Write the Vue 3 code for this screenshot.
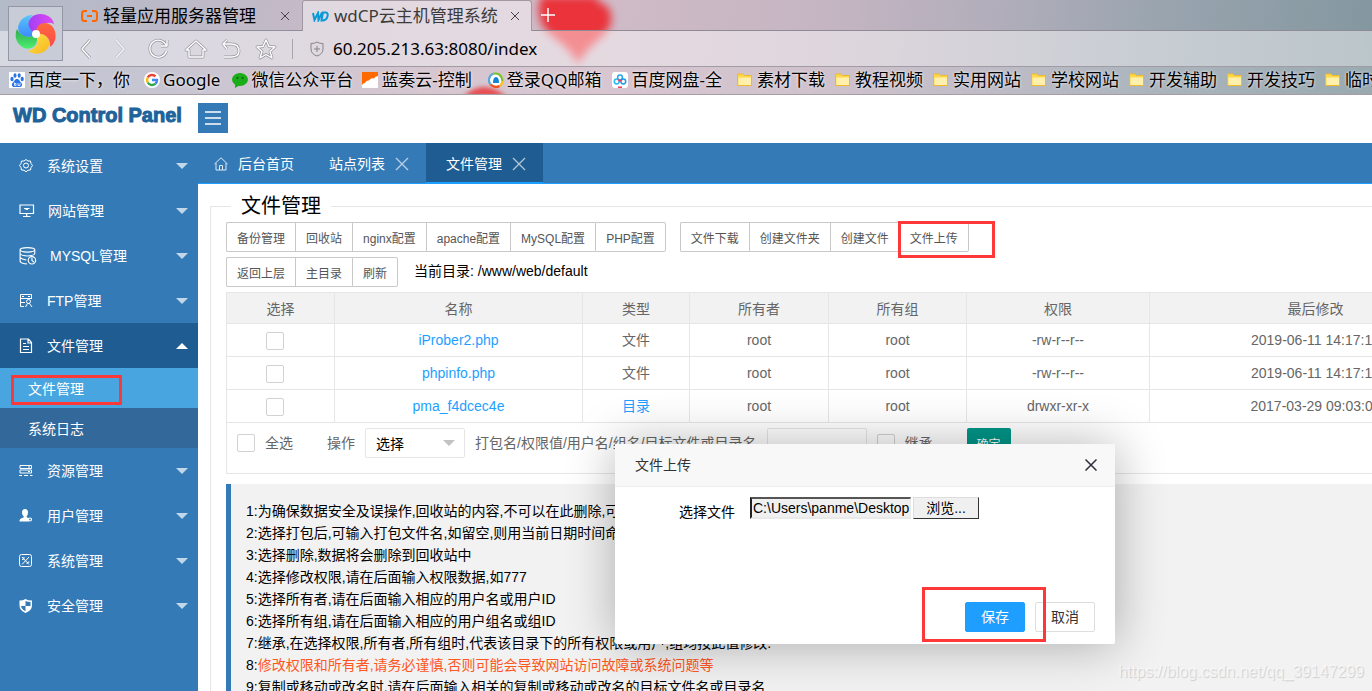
<script setup>
import { ref } from 'vue'

const bookmarks = [
  { icon: 'baidu', text: '百度一下，你', gap: 14 },
  { icon: 'google', text: 'Google', gap: 12 },
  { icon: 'wechat', text: '微信公众平台', gap: 9 },
  { icon: 'lanzou', text: '蓝奏云-控制', gap: 16 },
  { icon: 'qqmail', text: '登录QQ邮箱', gap: 11 },
  { icon: 'pan', text: '百度网盘-全', gap: 15 },
  { icon: 'folder', text: '素材下载', gap: 10 },
  { icon: 'folder', text: '教程视频', gap: 10 },
  { icon: 'folder', text: '实用网站', gap: 10 },
  { icon: 'folder', text: '学校网站', gap: 10 },
  { icon: 'folder', text: '开发辅助', gap: 10 },
  { icon: 'folder', text: '开发技巧', gap: 10 },
  { icon: 'folder', text: '临时', gap: 0 },
]

const menu = [
  { icon: 'gear', text: '系统设置' },
  { icon: 'monitor', text: '网站管理', size: 16 },
  { icon: 'database', text: 'MYSQL管理', size: 18 },
  { icon: 'ftp', text: 'FTP管理' },
  { icon: 'doc', text: '文件管理', open: true, children: ['文件管理', '系统日志'] },
  { icon: 'server', text: '资源管理' },
  { icon: 'user', text: '用户管理' },
  { icon: 'tools', text: '系统管理' },
  { icon: 'shield', text: '安全管理' },
]

const groupA = ['备份管理', '回收站', 'nginx配置', 'apache配置', 'MySQL配置', 'PHP配置']
const groupB = ['文件下载', '创建文件夹', '创建文件', '文件上传']
const groupC = ['返回上层', '主目录', '刷新']

const columns = ['选择', '名称', '类型', '所有者', '所有组', '权限', '最后修改']
const rows = [
  { name: 'iProber2.php', type: '文件', perm: '-rw-r--r--', time: '2019-06-11 14:17:17' },
  { name: 'phpinfo.php', type: '文件', perm: '-rw-r--r--', time: '2019-06-11 14:17:17' },
  { name: 'pma_f4dcec4e', type: '目录', dir: true, perm: 'drwxr-xr-x', time: '2017-03-29 09:03:00' },
]

const notes = [
  '为确保数据安全及误操作,回收站的内容,不可以在此删除,可',
  '选择打包后,可输入打包文件名,如留空,则用当前日期时间命',
  '选择删除,数据将会删除到回收站中',
  '选择修改权限,请在后面输入权限数据,如777',
  '选择所有者,请在后面输入相应的用户名或用户ID',
  '选择所有组,请在后面输入相应的用户组名或组ID',
  '继承,在选择权限,所有者,所有组时,代表该目录下的所有权限或用户,组均按此值修改.',
  '修改权限和所有者,请务必谨慎,否则可能会导致网站访问故障或系统问题等',
  '复制或移动或改名时,请在后面输入相关的复制或移动或改名的目标文件名或目录名',
]

const filePath = ref('C:\\Users\\panme\\Desktop')
</script>

<template>
  <div class="app">
    <div class="chrome">
      <svg class="heart" width="90" height="72" viewBox="0 0 90 72" aria-hidden="true">
        <path d="M14 0H70Q66 5 74 7Q85 12 83 27C80 40 62 46 50 68C40 46 20 42 13 26Q8 10 14 0Z" fill="#ec2c33" />
      </svg>
      <svg class="heart-tip" width="60" height="14" viewBox="0 0 60 14" aria-hidden="true">
        <path d="M8 14Q28-6 52 14Z" fill="#e2272d" />
      </svg>

      <button class="brand" aria-label="浏览器菜单">
        <svg width="42" height="42" viewBox="0 0 42 42">
          <defs>
            <linearGradient id="petal-a" x2="1"><stop stop-color="#a23df5" /><stop offset="1" stop-color="#e04cf0" /></linearGradient>
            <linearGradient id="petal-b" x2="0" y2="1"><stop stop-color="#ff6a3d" /><stop offset="1" stop-color="#fb4a4a" /></linearGradient>
            <linearGradient id="petal-c" x2="1" y2="1"><stop stop-color="#ffe14d" /><stop offset="1" stop-color="#f5b81c" /></linearGradient>
            <linearGradient id="petal-d" x2="0" y2="1"><stop stop-color="#2fa84f" /><stop offset="1" stop-color="#4cf070" /></linearGradient>
            <linearGradient id="petal-e" x2="0" y2="1"><stop stop-color="#58c6f8" /><stop offset="1" stop-color="#3d8bfd" /></linearGradient>
          </defs>
          <path d="M21 21C10 18 11 6 20 2C29-1 38 4 39 11C33 8 25 10 21 21Z" fill="url(#petal-a)" />
          <path d="M21 21C20 10 31 7 37 13C43 20 41 30 35 34C36 26 31 20 21 21Z" fill="url(#petal-b)" />
          <path d="M21 21C31 19 37 28 33 35C28 42 19 42 13 38C21 36 25 30 21 21Z" fill="url(#petal-c)" />
          <path d="M21 21C25 31 17 38 9 35C1 31-1 23 2 16C6 23 12 26 21 21Z" fill="url(#petal-d)" />
          <path d="M21 21C12 27 3 22 3 14C5 5 12 2 18 2C11 8 12 16 21 21Z" fill="url(#petal-e)" />
          <circle cx="21" cy="21" r="4" fill="#fff" />
        </svg>
      </button>

      <div class="tabstrip">
        <div class="btab">
          <svg width="17" height="12" viewBox="0 0 17 12" fill="none" stroke="#f60" stroke-width="2"><path d="M6 1H3.500Q1 1 1 3.500V8.500Q1 11 3.500 11H6M11 1H13.500Q16 1 16 3.500V8.500Q16 11 13.500 11H11M6 6H11" /></svg>
          <span>轻量应用服务器管理</span>
          <button aria-label="关闭标签"><svg width="8" height="8" viewBox="0 0 8 8" stroke="#444" stroke-width="1"><path d="M0 0L8 8M8 0L0 8" /></svg></button>
        </div>
        <div class="btab on">
          <svg width="17" height="11" viewBox="0 0 17 11" fill="none" stroke="#0a9ad8" stroke-width="2"><path d="M1 2L2.500 9L6 2L6.500 9L10 1.500M11 1L9.500 9.500H11C16 9 17 1.500 14 1.500H10" /></svg>
          <span>wdCP云主机管理系统</span>
          <button aria-label="关闭标签"><svg width="8" height="8" viewBox="0 0 8 8" stroke="#444" stroke-width="1"><path d="M0 0L8 8M8 0L0 8" /></svg></button>
        </div>
        <button class="plus" aria-label="新建标签"><svg width="14" height="14" viewBox="0 0 14 14" stroke="#fff" stroke-width="1.500"><path d="M7 0V14M0 7H14" /></svg></button>
      </div>

      <div class="toolbar">
        <svg class="nav-icons" width="196" height="24" viewBox="0 0 196 24" fill="none" stroke-linejoin="round">
          <g v-for="(c, i) in ['#96959e', '#fff']" :key="c" :stroke="c" :stroke-width="i ? 1.4 : 2.8">
            <path d="M10 3L2 12L10 21" />
            <path d="M36 3L44 12L36 21" :opacity="i ? 0.8 : 0.35" />
            <path d="M86 8A8.500 8.500 0 1 0 86.500 14M87 3V9H81" />
            <path d="M106 13L116 4L126 13H123V20H109V13Z" />
            <path d="M147 3L143 7L147 12M143 7H151Q159 7 159 14Q159 20 151 20H144" />
            <path d="M186 3L189 9.500L195 10L190 14.500L192 21L186 17.500L180 21L182 14.500L177 10L183 9.500Z" />
          </g>
        </svg>
        <i class="sep"></i>
        <svg class="guard" width="14" height="16" viewBox="0 0 14 16" fill="none" stroke="#85838a"><path d="M7 1Q9 2.500 13 2.500V8Q13 13 7 15Q1 13 1 8V2.500Q5 2.500 7 1ZM7 5V11M4 8H10" /></svg>
        <input class="url" aria-label="地址栏" value="60.205.213.63:8080/index" />
      </div>

      <nav class="bookmarks">
        <a v-for="(b, i) in bookmarks" :key="i" href="#" :style="{ marginRight: b.gap + 'px' }">
          <svg v-if="b.icon === 'baidu'" width="16" height="16" viewBox="0 0 16 16"><rect width="16" height="16" fill="#fff" /><g fill="#2a73e8"><ellipse cx="3" cy="7" rx="1.600" ry="2.200" /><ellipse cx="6" cy="3.500" rx="1.500" ry="2.200" /><ellipse cx="10.200" cy="3.500" rx="1.500" ry="2.200" /><ellipse cx="13.200" cy="7" rx="1.600" ry="2.200" /><path d="M8 7C10.500 7 10.500 9.500 12.500 11C14 13 12.500 15.500 10 15H6C3.500 15.500 2 13 3.500 11C5.500 9.500 5.500 7 8 7Z" /></g><path d="M5.500 10.500V13.500H7V11.500H5.500M9 11V13.500H11V11" stroke="#fff" stroke-width=".8" fill="none" /></svg>
          <svg v-else-if="b.icon === 'google'" width="16" height="16" viewBox="0 0 16 16"><circle cx="8" cy="8" r="8" fill="#fff" /><g fill="none" stroke-width="2.400"><path d="M3.700 5.500A5 5 0 0 1 11.500 4.300" stroke="#ea4335" /><path d="M3.700 10.500A5 5 0 0 1 3.700 5.500" stroke="#fbbc05" /><path d="M11.500 11.600A5 5 0 0 1 3.700 10.500" stroke="#34a853" /><path d="M8 8H13Q13 10.300 11.500 11.600" stroke="#4285f4" /></g></svg>
          <svg v-else-if="b.icon === 'wechat'" width="16" height="16" viewBox="0 0 16 16"><ellipse cx="8" cy="7.500" rx="8" ry="6.500" fill="#1aad19" /><path d="M3 12L3 16L8 13Z" fill="#1aad19" /><circle cx="5.500" cy="6" r="1" fill="#0b5c0b" /><circle cx="10.500" cy="6" r="1" fill="#0b5c0b" /></svg>
          <svg v-else-if="b.icon === 'lanzou'" width="16" height="16" viewBox="0 0 16 16"><rect width="16" height="16" fill="#fff" /><path d="M0 0H16V4Q13 4 12 6.500Q9 5.500 7 8.500Q4 8 3 11Q1 11 0 13Z" fill="#ff6a00" /></svg>
          <svg v-else-if="b.icon === 'qqmail'" width="16" height="16" viewBox="0 0 16 16"><circle cx="8" cy="8" r="7" fill="#fff" /><g fill="none" stroke-width="2.200"><path d="M2.500 12.500A7 7 0 0 1 5 1.800" stroke="#58a8dc" /><path d="M5 1.800Q13 0 14.500 9" stroke="#7abf2a" /><path d="M14.500 9Q14 13 11.500 14" stroke="#f5c21d" /><path d="M11.500 14Q7 16.500 2.500 12.500" stroke="#f0501d" /></g><path d="M5 11Q5 5 8 5Q11 5 11 11Z" fill="#1683d8" /></svg>
          <svg v-else-if="b.icon === 'pan'" width="16" height="16" viewBox="0 0 16 16"><rect width="16" height="16" rx="3" fill="#fff" /><g fill="none" stroke-width="1.500"><circle cx="8" cy="5.500" r="2.400" stroke="#28a5f5" /><circle cx="4.700" cy="9.500" r="2.400" stroke="#27b9f5" /><circle cx="11.300" cy="9.500" r="2.400" stroke="#1d9cea" /><path d="M6.200 7.500L8 9.300L9.800 7.500M6 15.200H10" stroke="#ee3f5c" /></g></svg>
          <svg v-else width="16" height="16" viewBox="0 0 16 16"><path d="M.5 2H6L7.500 3.500H14.500V13.500H.5Z" fill="#ffd84a" stroke="#efb92c" /><path d="M1.500 5.500H14V13H1.500Z" fill="#fff0ae" /></svg>
          <span>{{ b.text }}</span>
        </a>
      </nav>
    </div>

    <header class="top">
      <h1>WD Control Panel</h1>
      <button aria-label="折叠菜单"><svg width="16" height="14" viewBox="0 0 16 14" stroke="#fff" stroke-width="1.500"><path d="M0 1H16M0 7H16M0 13H16" /></svg></button>
    </header>

    <div class="body">
      <aside>
        <template v-for="m in menu" :key="m.text">
          <button class="item" :class="{ open: m.open }">
            <svg class="ico" :width="m.size || 15" :height="m.size || 16" viewBox="0 0 15 16" fill="none" stroke="#fff" stroke-width="1">
              <template v-if="m.icon === 'gear'"><path d="M7 1.500L9 3L11.500 3L12 5.500L13.500 7.500L12 9.500L11.500 12L9 12.200L7 13.800L5 12.200L2.500 12L2 9.500L.5 7.500L2 5.500L2.500 3L5 3Z" /><circle cx="7" cy="7.500" r="2.500" /></template>
              <template v-else-if="m.icon === 'monitor'"><path d="M.5 2H14V10.500H.5ZM7.200 10.500V13.500M3.500 13.500H11" stroke-width="1.200" /><path d="M4.500 5.500H10M6 6.500H8.500" /></template>
              <template v-else-if="m.icon === 'database'"><ellipse cx="7" cy="2.500" rx="6.500" ry="2" /><path d="M.5 2.500V6Q2 8 7 8Q12 8 13.500 6V2.500M.5 6V9.500Q2 11 6 11.500M.5 9.500V13Q2 15 6.500 15" /><circle cx="11" cy="11.800" r="3.300" /><path d="M11 9.500V12L13 13.500" /></template>
              <template v-else-if="m.icon === 'ftp'"><path d="M1.500 13.500V1.500H12.500V6M1.500 5.500H12.500M1.500 9.500H6M1.500 13.500H5M3 3.500H5M9 3.500H11" /><circle cx="9.500" cy="8.500" r="2" /><path d="M6.500 14L8.500 10.500H10.500L13 14" /></template>
              <template v-else-if="m.icon === 'doc'"><path d="M1.500 1H9.500L12.500 4.500V14.500H1.500ZM9 1V5H12.500M4 5.500H7M4 8.500H10M4 11.500H10" stroke-width="1.200" /></template>
              <template v-else-if="m.icon === 'server'"><path d="M1 2.500H12.500V5.500H1ZM1 7H12.500V10H1Z" /><path d="M9 4H11M9 8.500H11" /><path d="M0 12.500H3M5 12.500H9M11 12.500H13.500" stroke-width="1.200" /></template>
              <template v-else-if="m.icon === 'user'"><path d="M6 1Q9 1 9 4.500Q9 7 7.500 8.500Q8 10 10 10V13.500H.5Q0 10.500 4.500 9.500Q5 9 4.500 8Q3 7 3 4.500Q3 1 6 1Z" fill="#fff" stroke="none" /><circle cx="11" cy="11.500" r="1.500" stroke-width="1.200" /></template>
              <template v-else-if="m.icon === 'tools'"><rect x=".5" y="1.500" width="12" height="12" rx="2" /><path d="M3 4L10 11.500M10 4L3 11.500M3 6.500Q5.500 7 5 4M8 11Q8 8.500 10.500 9" /></template>
              <template v-else><path d="M6.500 1Q9 2.500 13 2.500V7.500Q13 12.500 6.500 15Q.5 12.500 .5 7.500V2.500Q4 2.500 6.500 1Z" fill="#fff" stroke="none" /><path d="M6.500 3V8H11.500V4Q9 4 6.500 3ZM6.500 8V13.300Q2.700 11.500 2 8Z" fill="#337ab7" stroke="none" /></template>
            </svg>
            <span>{{ m.text }}</span>
            <i class="caret"></i>
          </button>
          <div v-if="m.children" class="sub">
            <a v-for="(c, i) in m.children" :key="c" href="#" :class="{ on: i === 0 }">{{ c }}<i v-if="i === 0" class="mark mark-side"></i></a>
          </div>
        </template>
      </aside>

      <main>
        <nav class="tabs">
          <a href="#" class="home"><svg width="14" height="14" viewBox="0 0 14 14" fill="none" stroke="#dfe9f2"><path d="M.5 7L7 .8L13.500 7M2 6V13H12V6M5.500 13V8.500H8.500V13" /></svg>后台首页</a>
          <a href="#">站点列表<svg width="14" height="14" viewBox="0 0 14 14" stroke="#b9cfe3" stroke-width="1.400"><path d="M1 1L13 13M13 1L1 13" /></svg></a>
          <a href="#" class="on">文件管理<svg width="14" height="14" viewBox="0 0 14 14" stroke="#b0c4d6" stroke-width="1.400"><path d="M1 1L13 13M13 1L1 13" /></svg></a>
        </nav>

        <fieldset>
          <legend>文件管理</legend>
          <div class="row">
            <div class="group"><button v-for="b in groupA" :key="b">{{ b }}</button></div>
            <div class="group"><button v-for="b in groupB" :key="b">{{ b }}</button><i class="mark mark-upload"></i></div>
          </div>
          <div class="row">
            <div class="group"><button v-for="b in groupC" :key="b">{{ b }}</button></div>
            <span class="path">当前目录: /www/web/default</span>
          </div>

          <table>
            <colgroup><col v-for="n in 7" :key="n" :class="'c' + n" /></colgroup>
            <thead><tr><th v-for="c in columns" :key="c">{{ c }}</th></tr></thead>
            <tbody>
              <tr v-for="r in rows" :key="r.name">
                <td><input type="checkbox" :aria-label="'选择 ' + r.name" /></td>
                <td><a href="#">{{ r.name }}</a></td>
                <td><a v-if="r.dir" href="#">{{ r.type }}</a><template v-else>{{ r.type }}</template></td>
                <td>root</td>
                <td>root</td>
                <td>{{ r.perm }}</td>
                <td>{{ r.time }}</td>
              </tr>
            </tbody>
          </table>

          <div class="actions">
            <label class="all"><input type="checkbox" />全选</label>
            <label class="op" for="op">操作</label>
            <div class="select"><select id="op"><option>选择</option></select></div>
            <label class="target" for="target">打包名/权限值/用户名/组名/目标文件或目录名</label>
            <input id="target" class="text" type="text" />
            <label class="inherit"><input type="checkbox" />继承</label>
            <button class="ok">确定</button>
          </div>

          <blockquote>
            <div v-for="(n, i) in notes" :key="i">{{ i + 1 }}:<span :class="{ warn: i === 7 }">{{ n }}</span></div>
          </blockquote>
        </fieldset>
      </main>
    </div>

    <section class="dialog" role="dialog" aria-labelledby="dlg-title">
      <div class="dlg-head">
        <h2 id="dlg-title">文件上传</h2>
        <button aria-label="关闭"><svg width="12" height="12" viewBox="0 0 12 12" stroke="#2e2d3c" stroke-width="1.500"><path d="M.5 .5L11.500 11.500M11.500 .5L.5 11.500" /></svg></button>
      </div>
      <div class="dlg-body">
        <label for="file">选择文件</label>
        <input id="file" v-model="filePath" type="text" />
        <button>浏览...</button>
      </div>
      <div class="dlg-foot">
        <button class="save">保存</button>
        <button>取消</button>
      </div>
      <i class="mark mark-save"></i>
    </section>

    <div class="watermark">https://blog.csdn.net/qq_39147299</div>
  </div>
</template>

<style>
html, body { margin: 0; overflow: hidden; }
</style>

<style scoped>
.app {
  position: relative;
  display: flex;
  flex-direction: column;
  height: 100vh;
  overflow: hidden;
  background: #fff;
  color: #000;
  font: 14px/22px "Liberation Sans", "Noto Sans CJK SC", sans-serif;
}
*, *::before, *::after { box-sizing: border-box; }
button { font: inherit; padding: 0; border: 0; background: none; color: inherit; }
a { color: inherit; text-decoration: none; }
svg { display: block; flex: none; }
i { display: block; }
.mark { position: absolute; border: 3px solid #fd3838; pointer-events: none; }

/* browser frame */
.chrome {
  position: relative;
  flex: none;
  overflow: hidden;
  background: linear-gradient(97deg, #b3bac8 0%, #bbb9c8 12%, #cbbac6 28%, #d0bac7 44%, #c5b5c2 60%, #b0adba 73%, #9ba5b0 83%, #83979f 100%);
  font-family: "Noto Sans", "Noto Sans CJK SC", sans-serif;
  font-size: 17px;
}
.heart { position: absolute; left: 528px; top: -4px; filter: blur(4px); opacity: .95; }
.heart-tip { position: absolute; left: 455px; top: 83px; filter: blur(2px); }
.brand {
  position: absolute;
  z-index: 2;
  left: 8px;
  top: 6px;
  display: grid;
  place-items: center;
  width: 55px;
  height: 55px;
  border: 1px solid #9496a5;
  background: #c8ccd6;
}
.tabstrip { position: relative; display: flex; height: 31px; padding-left: 63px; }
.btab {
  display: flex;
  align-items: center;
  width: 239px;
  padding: 1px 13px 0 18px;
  border-bottom: 1px solid #918d9a;
}
.btab span { margin: 0 auto 0 5px; white-space: nowrap; }
.btab.on {
  width: 230px;
  padding: 0 12px 0 9px;
  border: 1px solid #a397a1;
  border-bottom: 0;
  border-radius: 3px 3px 0 0;
  background: rgba(255, 255, 255, .45);
  color: #3b3b3b;
}
.plus { flex: 1; padding: 0 9px; border-bottom: 1px solid #8f8a94; }
.toolbar {
  position: relative;
  display: flex;
  align-items: center;
  height: 36px;
  padding-left: 78px;
  border-bottom: 1px solid #a19ba3;
  background: rgba(255, 255, 255, .45);
}
.nav-icons { width: 200px; }
.sep { width: 1px; height: 20px; margin: 0 17px 0 14px; background: #aaa4ae; }
.url {
  flex: 1;
  min-width: 0;
  margin-left: 9px;
  padding: 0;
  border: 0;
  outline: 0;
  background: transparent;
  font: inherit;
}
.bookmarks {
  position: relative;
  display: flex;
  height: 28px;
  padding: 0 0 1px 9px;
  border-bottom: 1px solid #a79ba4;
  background: rgba(255, 255, 255, .18);
  text-shadow: 0 0 3px #fff;
}
.bookmarks a { display: flex; flex: none; align-items: center; gap: 3px; }
.bookmarks a:nth-child(n+7) { gap: 4px; }

/* page header */
.top { display: flex; flex: none; height: 48px; padding: 8px 0 0 13px; }
h1 {
  width: 185px;
  margin: 0;
  color: #20629a;
  font: bold 20px/24px "Liberation Sans", sans-serif;
  -webkit-text-stroke: 1px #20629a;
  white-space: nowrap;
}
.top button { display: grid; place-items: center; width: 30px; height: 30px; background: #337ab7; }

.body { display: flex; flex: 1; min-height: 0; }
aside { flex: none; width: 198px; background: #337ab7; color: #fff; }
.item { display: flex; align-items: center; width: 100%; height: 45px; padding: 0 10px 0 19px; }
.item span { margin: 0 auto 0 13px; }
.item.open { background: #1e5c92; }
.caret { border: 6px solid transparent; border-top-color: rgba(255, 255, 255, .7); border-bottom: 0; }
.open .caret { border-top: 0; border-bottom: 6px solid #fff; }
.sub a { position: relative; display: block; height: 40px; padding-left: 28px; background: #33689b; line-height: 42px; }
.sub a.on { background: #48a5df; }
.mark-side { left: 11px; top: 7px; width: 111px; height: 30px; }

main { flex: 1; min-width: 0; overflow: hidden; }
.tabs { display: flex; height: 41px; background: #337ab7; border-bottom: 1px solid #1e9fff; color: #fff; }
.tabs a { display: flex; align-items: center; gap: 10px; height: 41px; padding: 0 17px 0 20px; }
.tabs .home { padding: 0 15px 0 16px; }
.tabs .on { padding-top: 2px; border-bottom: 2px solid #1e9fff; background: #1e5c92; }

fieldset { min-width: 1288px; margin: 8px 0 0 12px; padding: 2px 15px 0; border: 1px solid #e6e6e6; }
legend { margin-left: 5px; padding: 0 10px; font-size: 20px; line-height: 28px; }
.row { display: flex; gap: 14px; margin-bottom: 5px; }
.group { position: relative; display: flex; }
.group button {
  height: 30px;
  padding: 3px 10px 0;
  border: 1px solid #c9c9c9;
  border-right: 0;
  background: #fff;
  color: #555;
  font-size: 12px;
  white-space: nowrap;
}
.group button:first-child { border-radius: 2px 0 0 2px; }
.group button:last-of-type { border-right: 1px solid #c9c9c9; border-radius: 0 2px 2px 0; }
.mark-upload { right: -26px; top: -1px; width: 97px; height: 37px; }
.path { padding: 3px 0 0 2px; }

table { width: 100%; table-layout: fixed; border-collapse: collapse; color: #666; text-align: center; }
.c1 { width: 108px; }
.c2 { width: 248px; }
.c3 { width: 107px; }
.c4 { width: 139px; }
.c5 { width: 138px; }
.c6 { width: 183px; }
th, td { height: 33px; padding: 0; border: 1px solid #e6e6e6; }
th { height: 31px; padding-top: 2px; background: #f2f2f2; font-weight: 400; }
td a { color: #1e9fff; }
input[type=checkbox] {
  appearance: none;
  width: 18px;
  height: 18px;
  margin: 0;
  border: 1px solid #d2d2d2;
  border-radius: 2px;
  background: #fff;
}
td input { display: block; margin: 1px 0 0 39px !important; }
.actions {
  display: flex;
  align-items: center;
  height: 51px;
  padding: 0 0 10px 10px;
  border: 1px solid #e6e6e6;
  border-top: 0;
  color: #666;
  white-space: nowrap;
}
.all, .inherit { display: flex; align-items: center; gap: 10px; }
.op { margin: 0 10px 0 34px; }
.select { position: relative; width: 100px; height: 30px; }
.select::after { content: ""; position: absolute; right: 10px; top: 12px; border: 6px solid transparent; border-top-color: #c2c2c2; border-bottom: 0; }
select { appearance: none; width: 100%; height: 30px; padding: 2px 10px 0; border: 1px solid #e6e6e6; border-radius: 2px; background: #fff; color: #000; font: inherit; }
.target { margin: 0 10px; }
.text { width: 100px; height: 30px; margin-right: 10px; border: 1px solid #e6e6e6; border-radius: 2px; background: #fff; }
.ok { width: 44px; height: 30px; margin-left: 34px; padding-top: 3px; border-radius: 2px; background: #009688; color: #fff; font-size: 12px; }
blockquote { margin: 10px 0 0; padding: 16px 15px; border-left: 5px solid #337ab7; background: #f2f2f2; white-space: nowrap; }
.warn { color: #ff5722; }

/* upload dialog */
.dialog {
  position: absolute;
  left: 615px;
  top: 444px;
  display: flex;
  flex-direction: column;
  width: 500px;
  height: 200px;
  border-radius: 2px;
  background: #fff;
  box-shadow: 1px 1px 50px rgba(0, 0, 0, .3);
}
.dlg-head { display: flex; align-items: center; justify-content: space-between; height: 43px; padding: 0 18px 0 20px; border-bottom: 1px solid #eee; background: #f8f8f8; color: #333; }
h2 { margin: 0; font-size: 14px; font-weight: 400; }
.dlg-body { display: flex; flex: 1; align-items: flex-start; padding: 10px 0 0 64px; }
.dlg-body label { margin: 4px 15px 0 0; }
.dlg-body input { width: 161px; height: 22px; padding: 0 0 0 1px; border: 2px solid #e9e9e9; border-top-color: #555; border-left-color: #222; border-right-width: 1px; background: #f0f0f0; font: inherit; line-height: 18px; }
.dlg-body button { width: 66px; height: 22px; margin-left: 2px; border: 1px solid #333; border-top-color: #ddd; border-left-color: #ddd; background: #f0f0f0; line-height: 20px; }
.dlg-foot { display: flex; justify-content: flex-end; gap: 10px; padding: 0 20px 12px; }
.dlg-foot button { width: 60px; height: 30px; border: 1px solid #dedede; border-radius: 2px; background: #fff; color: #333; }
.dlg-foot .save { border-color: #1e9fff; background: #1e9fff; color: #fff; }
.mark-save { left: 307px; top: 143px; width: 124px; height: 55px; }
.watermark { position: absolute; right: 8px; bottom: 8px; color: rgba(255, 255, 255, .6); font-size: 16px; text-shadow: 1px 1px 1px rgba(0, 0, 0, .15); pointer-events: none; }
</style>
